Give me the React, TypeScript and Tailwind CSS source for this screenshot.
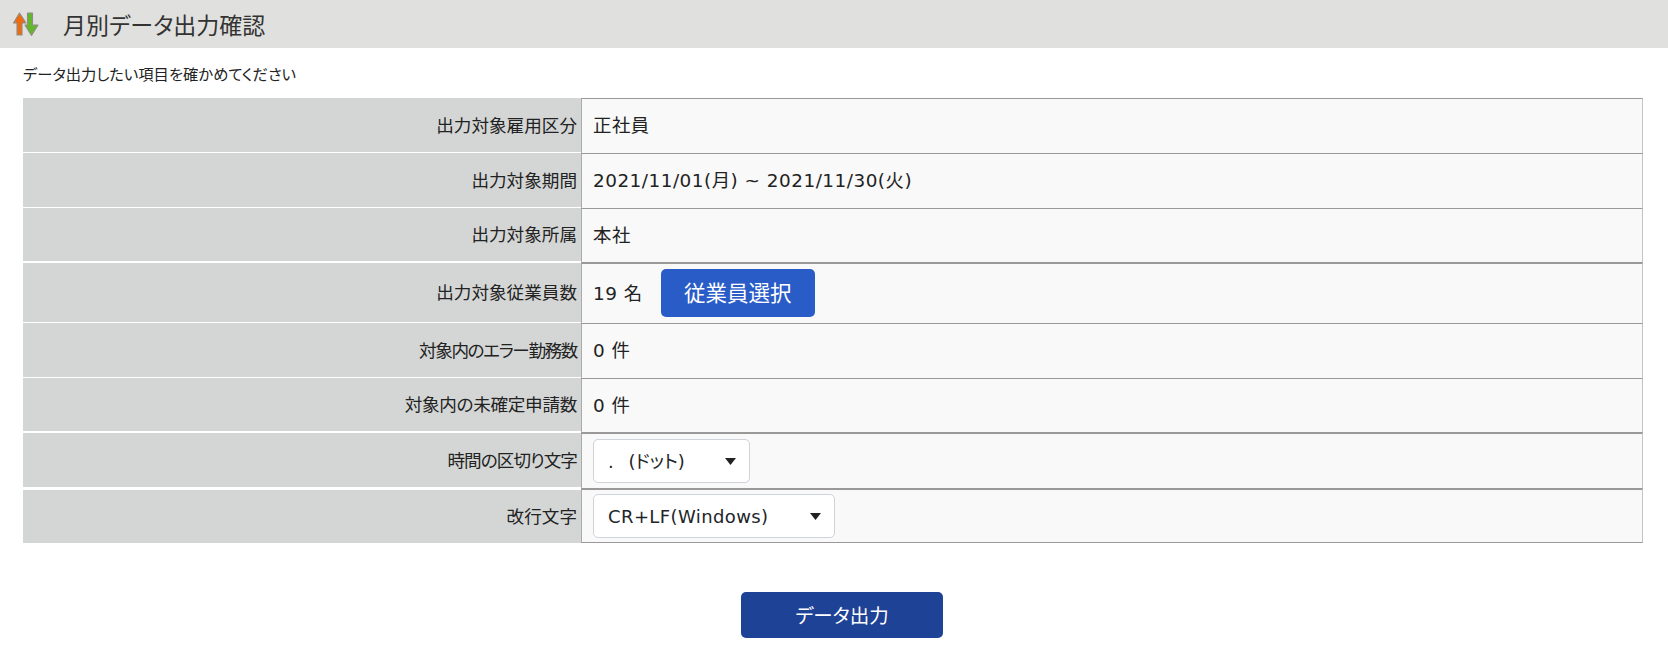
const font = { fontFamily: '"DejaVu Sans", "Noto Sans CJK JP", sans-serif' };
const cjk = { fontFamily: '"Noto Sans CJK JP", "Noto Sans", sans-serif' };

function SortIcon() {
  return (
    <svg width="28" height="26" viewBox="0 0 28 26" className="shrink-0">
      <path d="M15.5 2 L20.5 2 L20.5 14 L26 14 L19.5 24.5 L13 14 L15.5 14 Z" fill="#62b82a" stroke="#8d8d85" strokeWidth="1.1" strokeLinejoin="round" />
      <path d="M7.5 2 L14 12 L10 12 L10 24 L5 24 L5 12 L1.5 12 Z" fill="#f06a10" stroke="#8d8d85" strokeWidth="1.1" strokeLinejoin="round" />
    </svg>
  );
}

function Select({ label, className }: { label: string; className: string }) {
  return (
    <div className={`flex h-[44px] items-center justify-between rounded-[5px] border border-[#ced4da] bg-white pl-[14px] pr-[13px] text-[18px] text-[#212529] ${className}`}>
      <span className="whitespace-pre">{label}</span>
      <svg width="11" height="7" viewBox="0 0 11 7">
        <path d="M0 0 H11 L5.5 7 Z" fill="#222" />
      </svg>
    </div>
  );
}

type RowProps = {
  label: string;
  height: string;
  labelClass?: string;
  valueClass?: string;
  children: React.ReactNode;
};

function Row({ label, height, labelClass = "border-b", valueClass = "border-t", children }: RowProps) {
  return (
    <div className={`flex ${height}`}>
      <div
        className={`flex w-[558px] shrink-0 items-center justify-end border-white bg-[#d4d6d5] pr-[4px] text-[17.6px] text-[#222] ${labelClass}`}
        style={cjk}
      >
        {label}
      </div>
      <div className={`flex flex-1 items-center gap-[18px] border-l border-r border-l-[#aaa] border-r-[#c4c4c4] border-t-[#999] border-b-[#999] bg-[#f9f9f9] pl-[11px] text-[18.4px] tracking-[0.5px] text-[#222] ${valueClass}`}>
        {children}
      </div>
    </div>
  );
}

export default function App() {
  return (
    <div className="h-[657px] w-full bg-white [font-feature-settings:'palt']" style={font}>
      <div className="flex h-[48px] items-center gap-[23px] bg-[#e0e0de] pl-[12px]" style={cjk}>
        <SortIcon />
        <h1 className="text-[23px] font-normal text-[#333]">月別データ出力確認</h1>
      </div>
      <p className="ml-[23px] mt-[14px] h-[36px] text-[15.3px] text-[#222]" style={cjk}>データ出力したい項目を確かめてください</p>
      <div className="ml-[23px] w-[1620px]">
        <Row label="出力対象雇用区分" height="h-[55px]">正社員</Row>
        <Row label="出力対象期間" height="h-[55px]">2021/11/01(月) ~ 2021/11/30(火)</Row>
        <Row label="出力対象所属" height="h-[54px]">本社</Row>
        <Row label="出力対象従業員数" height="h-[61px]" labelClass="border-y" valueClass="border-t-2">
          <span>19 名</span>
          <button className="mb-[2px] flex h-[48px] w-[154px] items-center justify-center rounded-[5px] bg-[#2a5cc8] text-[21.5px] tracking-normal text-white" style={cjk}>
            従業員選択
          </button>
        </Row>
        <Row label="対象内のエラー勤務数" height="h-[55px]" labelClass="border-b tracking-[-1.4px]">0 件</Row>
        <Row label="対象内の未確定申請数" height="h-[54px]" labelClass="border-b tracking-[-0.3px]">0 件</Row>
        <Row label="時間の区切り文字" height="h-[56px]" labelClass="border-y tracking-[-0.95px]" valueClass="border-t-2">
          <Select label={". \u2002(ドット)"} className="w-[157px] tracking-normal" />
        </Row>
        <Row label="改行文字" height="h-[55px]" labelClass="border-t-2" valueClass="border-t-2 border-b">
          <Select label="CR+LF(Windows)" className="w-[242px] tracking-[0.4px]" />
        </Row>
      </div>
      <div className="mt-[49px] flex justify-center pl-[16px]">
        <button className="flex h-[46px] w-[202px] items-center justify-center rounded-[5px] bg-[#1e4296] text-[19.5px] text-white" style={cjk}>
          データ出力
        </button>
      </div>
    </div>
  );
}
